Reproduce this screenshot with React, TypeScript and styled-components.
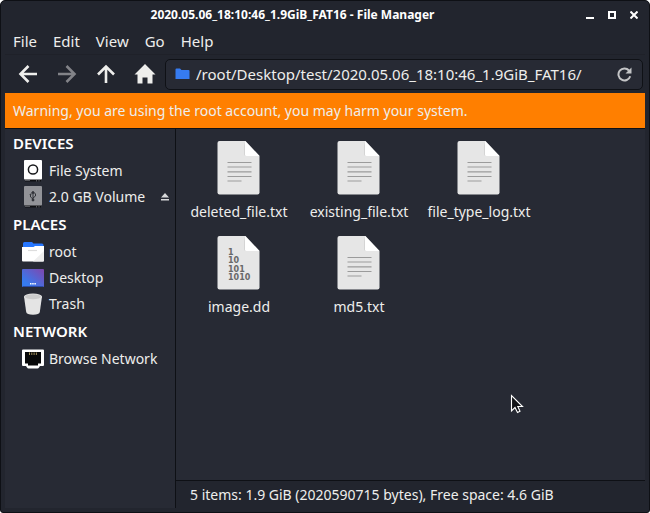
import React from "react";
import styled, { createGlobalStyle } from "styled-components";

const GlobalStyle = createGlobalStyle`
  *, *::before, *::after { box-sizing: border-box; }
  body {
    margin: 0;
    background: #ffffff;
    color: #eeeeec;
    font: 14px/20px "Noto Sans", "Open Sans", sans-serif;
  }
  button, input { font: inherit; color: inherit; }
  svg { display: block; flex: none; }
`;

const Window = styled.div`
  display: flex;
  flex-direction: column;
  min-height: 100vh;
  padding: 0 4px 4px;
  border: 1px solid #0e1015;
  border-radius: 5px 5px 3px 3px;
  background: #22252e;
`;

const TitleBar = styled.header`
  display: flex;
  align-items: center;
  height: 27px;
`;

const Title = styled.h1`
  flex: 1;
  margin: 0;
  text-align: center;
  white-space: nowrap;
  font-size: 12px;
  line-height: 16px;
  font-weight: 700;
  color: #ffffff;
`;

const WindowControls = styled.div`
  display: flex;
  gap: 2px;
  padding-right: 1px;
`;

const PlainButton = styled.button`
  display: flex;
  align-items: center;
  justify-content: center;
  padding: 0;
  border: 0;
  background: transparent;
`;

const ControlButton = styled(PlainButton)`
  width: 20px;
  height: 20px;
`;

const MenuBar = styled.nav`
  display: flex;
  height: 27px;
  border-bottom: 1px solid #1f2129;
`;

const MenuButton = styled(PlainButton)`
  padding: 0 8px 1px;
  font-size: 15px;
`;

const Toolbar = styled.div`
  display: flex;
  align-items: center;
  height: 38px;
  padding: 0 2px 0 3px;
`;

const ToolButton = styled(PlainButton)`
  width: 39px;
  height: 30px;
  color: #eeeeec;
  &:disabled { color: #828388; }
`;

const AddressBar = styled.label`
  display: flex;
  flex: 1;
  align-items: center;
  height: 31px;
  margin-left: 1px;
  gap: 6px;
  padding: 0 10px 0 9px;
  border: 1px solid #0f1116;
  border-radius: 5px;
  background: #272a34;
`;

const AddressInput = styled.input`
  flex: 1;
  min-width: 0;
  padding: 0;
  border: 0;
  outline: 0;
  background: transparent;
  font-size: 15px;
`;

const Warning = styled.div`
  height: 35px;
  padding: 0 8px;
  line-height: 36px;
  background: #ff7f00;
`;

const Body = styled.div`
  display: flex;
  flex: 1;
  border-top: 1px solid #0e1015;
  background: #272a34;
`;

const Sidebar = styled.aside`
  width: 171px;
  border-right: 1px solid #0e1015;
`;

const SectionTitle = styled.h2`
  margin: 0;
  padding-left: 8px;
  font-size: 15px;
  line-height: 29px;
  font-weight: 600;
  color: #ffffff;
`;

const PlaceList = styled.ul`
  margin: 0;
  padding: 0;
  list-style: none;
`;

const PlaceRow = styled.li`
  display: flex;
  align-items: center;
  height: 26px;
  padding: 0 6px 0 17px;
`;

const PlaceButton = styled(PlainButton)`
  flex: 1;
  justify-content: flex-start;
  gap: 5px;
  white-space: nowrap;
`;

const Main = styled.main`
  display: flex;
  flex: 1;
  flex-direction: column;
  min-width: 0;
`;

const FileGrid = styled.div`
  display: grid;
  flex: 1;
  grid-template-columns: repeat(auto-fill, 120px);
  grid-auto-rows: 95px;
  align-content: start;
  padding: 11px 3px;
`;

const FileButton = styled(PlainButton)`
  flex-direction: column;
  justify-content: flex-start;
  gap: 6px;
  white-space: nowrap;
`;

const StatusBar = styled.footer`
  height: 28px;
  padding-left: 14px;
  border-top: 1px solid #0e1015;
  line-height: 27px;
  background: #22252e;
`;

const Pointer = styled.svg`
  position: absolute;
  left: 510px;
  top: 394px;
  pointer-events: none;
`;

const ArrowIcon = ({ turn }: { turn: number }) => (
  <svg width="20" height="20" viewBox="0 0 20 20" fill="none" stroke="currentColor" strokeWidth="2.6">
    <path d="M19 10H3M10.5 2 2.5 10l8 8" transform={`rotate(${turn} 10 10)`} />
  </svg>
);

const HomeIcon = () => (
  <svg width="22" height="20" viewBox="0 0 22 20" fill="currentColor">
    <path d="M11 0 21.5 10.5H18.5V19.5h-5v-6h-5v6h-5V10.5H.5L11 0Z" />
  </svg>
);

const FolderIcon = () => (
  <svg width="15" height="12" viewBox="0 0 15 12">
    <path d="M.5 1.5Q.5 .5 1.5 .5H5l1.5 1.5H13.5q1 0 1 1V11H.5Z" fill="#367bf0" />
  </svg>
);

const ReloadIcon = () => (
  <svg width="15" height="15" viewBox="0 0 15 15">
    <path d="M12 3.5A6 6 0 1 0 13.2 9.2" fill="none" stroke="#c4c5c7" strokeWidth="2" />
    <path d="M14.5 .5v6h-6Z" fill="#c4c5c7" />
  </svg>
);

const DriveIcon = ({ usb = false }: { usb?: boolean }) => (
  <svg width="22" height="22" viewBox="0 0 22 22">
    <path d="M3 17h16v4.5H3Z" fill="#0e0f12" />
    <rect x="2" y="0" width="18" height="19.5" rx="1" fill={usb ? "#929398" : "#ffffff"} />
    <path d="M3 20.5h5" stroke="#55565b" />
    <path d="M14.5 20v1.5M17 20v1.5" stroke="#55565b" />
    {usb ? (
      <g fill="none" stroke="#303238" strokeWidth="1">
        <path d="M11 6v9M8.5 8.5v2.5l2.5 2M13.5 7.5V10L11 12" />
        <path d="m9.5 7.2 1.5-2 1.5 2Z" fill="#303238" />
        <circle cx="11" cy="14" r="1" fill="#303238" />
        <circle cx="8.5" cy="8.7" r=".5" />
      </g>
    ) : (
      <circle cx="11" cy="9.5" r="4.6" fill="none" stroke="#17181b" strokeWidth="1.5" />
    )}
  </svg>
);

const HomeFolderIcon = () => (
  <svg width="22" height="22" viewBox="0 0 22 22">
    <path d="M1 7V2.5Q1 1 2.5 1H10l1.5 1.5H20q1.5 0 1.5 1.5v3Z" fill="#2777ff" />
    <path d="M0 6h11.5l1.5-1h9v14.5q0 1-1 1H1q-1 0-1-1Z" fill="#ffffff" />
    <path d="M22 10v9.5q0 1-1 1H11Z" fill="#eeeeee" />
    <path d="M6 9.5h9" stroke="#dddddd" strokeWidth="1.2" />
  </svg>
);

const DesktopIcon = () => (
  <svg width="22" height="22" viewBox="0 0 22 22">
    <defs>
      <linearGradient id="desktop-fill" x1="0" y1="1" x2="1" y2="0">
        <stop offset="0.2" stopColor="#367bf0" />
        <stop offset="1" stopColor="#8046ad" />
      </linearGradient>
    </defs>
    <rect y="2" width="22" height="18" rx="1" fill="url(#desktop-fill)" />
    <path d="M1 19.5h20" stroke="#2b49a4" />
    <path d="M8 16.8h6" stroke="#ffffff" strokeWidth="1.6" strokeDasharray="1.5 .7" />
  </svg>
);

const TrashIcon = () => (
  <svg width="22" height="22" viewBox="0 0 22 22">
    <path d="M2 3.5 4.2 19q.5 2.7 6.8 2.7t6.8-2.7L20 3.5Z" fill="#e4e4e4" />
    <ellipse cx="11" cy="3.8" rx="9" ry="3.3" fill="#e4e4e4" />
    <ellipse cx="11" cy="3.8" rx="8" ry="2.5" fill="#cccccc" />
  </svg>
);

const NetworkIcon = () => (
  <svg width="22" height="22" viewBox="0 0 22 22">
    <path d="M1 1.5h20q1 0 1 1V17q0 1-1 1h-3l-1 1.5q-.5 1-1.5 1H6.500q-1 0-1.500-1L4 18H1q-1 0-1-1V2.500q0-1 1-1Z" fill="#ffffff" />
    <path d="M3 4h16v11.500h-3V17.500H6V15.500H3Z" fill="#08090a" />
    <path d="M7.5 4.500v2.500M9.8 4.500v2.500M12.1 4.500v2.500M14.4 4.500v2.500" stroke="#a3905c" strokeWidth="1" />
  </svg>
);

const FileIcon = ({ binary = false }: { binary?: boolean }) => (
  <svg width="44" height="56" viewBox="0 0 44 56">
    <path d="M2.5 1h26L42.5 16v36.5q0 2-2 2h-38q-2 0-2-2V3q0-2 2-2Z" fill="#e6e6e6" />
    <path d="M27 1.5V14q0 2 2 2h1Z" fill="#d4d4d4" />
    <path d="M28 1 42.5 16H29.5q-1.5 0-1.5-1.5Z" fill="#ffffff" />
    {binary ? (
      <g fill="#686868" fontFamily="DejaVu Sans, sans-serif" fontSize="8" fontWeight="700">
        <text x="11" y="20">1</text>
        <text x="11" y="28">10</text>
        <text x="11" y="37">101</text>
        <text x="11" y="45">1010</text>
      </g>
    ) : (
      <path d="M10.5 22.5h24M10.5 27h24M10.5 31.8h24M10.5 36.5h24M10.5 41h14" stroke="#9b9b9b" strokeWidth="1.2" />
    )}
  </svg>
);

type Place = { name: string; icon: React.ReactNode; ejectable?: boolean };

const sections: { title: string; places: Place[] }[] = [
  {
    title: "DEVICES",
    places: [
      { name: "File System", icon: <DriveIcon /> },
      { name: "2.0 GB Volume", icon: <DriveIcon usb />, ejectable: true },
    ],
  },
  {
    title: "PLACES",
    places: [
      { name: "root", icon: <HomeFolderIcon /> },
      { name: "Desktop", icon: <DesktopIcon /> },
      { name: "Trash", icon: <TrashIcon /> },
    ],
  },
  { title: "NETWORK", places: [{ name: "Browse Network", icon: <NetworkIcon /> }] },
];

const files = ["deleted_file.txt", "existing_file.txt", "file_type_log.txt", "image.dd", "md5.txt"];

export default function App() {
  return (
    <>
      <GlobalStyle />
      <Window>
        <TitleBar>
          <Title>2020.05.06_18:10:46_1.9GiB_FAT16 - File Manager</Title>
          <WindowControls>
            <ControlButton aria-label="Minimize">
              <svg width="8" height="8"><path d="M0 6h8v2H0Z" fill="#fff" /></svg>
            </ControlButton>
            <ControlButton aria-label="Maximize">
              <svg width="8" height="8"><path d="M1 1h6v6H1Z" fill="none" stroke="#fff" strokeWidth="2" /></svg>
            </ControlButton>
            <ControlButton aria-label="Close">
              <svg width="8" height="8"><path d="m.5.5 7 7m0-7-7 7" stroke="#fff" strokeWidth="2" /></svg>
            </ControlButton>
          </WindowControls>
        </TitleBar>
        <MenuBar>
          {["File", "Edit", "View", "Go", "Help"].map((item) => (
            <MenuButton key={item}>{item}</MenuButton>
          ))}
        </MenuBar>
        <Toolbar>
          <ToolButton aria-label="Back"><ArrowIcon turn={0} /></ToolButton>
          <ToolButton aria-label="Forward" disabled><ArrowIcon turn={180} /></ToolButton>
          <ToolButton aria-label="Up"><ArrowIcon turn={90} /></ToolButton>
          <ToolButton aria-label="Home"><HomeIcon /></ToolButton>
          <AddressBar>
            <FolderIcon />
            <AddressInput aria-label="Location" defaultValue="/root/Desktop/test/2020.05.06_18:10:46_1.9GiB_FAT16/" />
            <PlainButton aria-label="Reload"><ReloadIcon /></PlainButton>
          </AddressBar>
        </Toolbar>
        <Warning role="alert">Warning, you are using the root account, you may harm your system.</Warning>
        <Body>
          <Sidebar>
            {sections.map((section) => (
              <section key={section.title}>
                <SectionTitle>{section.title}</SectionTitle>
                <PlaceList>
                  {section.places.map((place) => (
                    <PlaceRow key={place.name}>
                      <PlaceButton>{place.icon}{place.name}</PlaceButton>
                      {place.ejectable && (
                        <PlainButton aria-label="Eject">
                          <svg width="8" height="8"><path d="M4 0 8 4.5H0ZM0 6h8v1.5H0Z" fill="#d7d8da" /></svg>
                        </PlainButton>
                      )}
                    </PlaceRow>
                  ))}
                </PlaceList>
              </section>
            ))}
          </Sidebar>
          <Main>
            <FileGrid>
              {files.map((name) => (
                <FileButton key={name}>
                  <FileIcon binary={name.endsWith(".dd")} />
                  {name}
                </FileButton>
              ))}
            </FileGrid>
            <StatusBar>5 items: 1.9 GiB (2020590715 bytes), Free space: 4.6 GiB</StatusBar>
          </Main>
        </Body>
      </Window>
      <Pointer width="14" height="20" viewBox="0 0 14 20">
        <path d="M1.5 1.5v15.5l3.5-3.5 2.5 5 2.5-1.3L7.8 12.5h4.700Z" fill="#111216" stroke="#fff" strokeWidth="1.1" />
      </Pointer>
    </>
  );
}
